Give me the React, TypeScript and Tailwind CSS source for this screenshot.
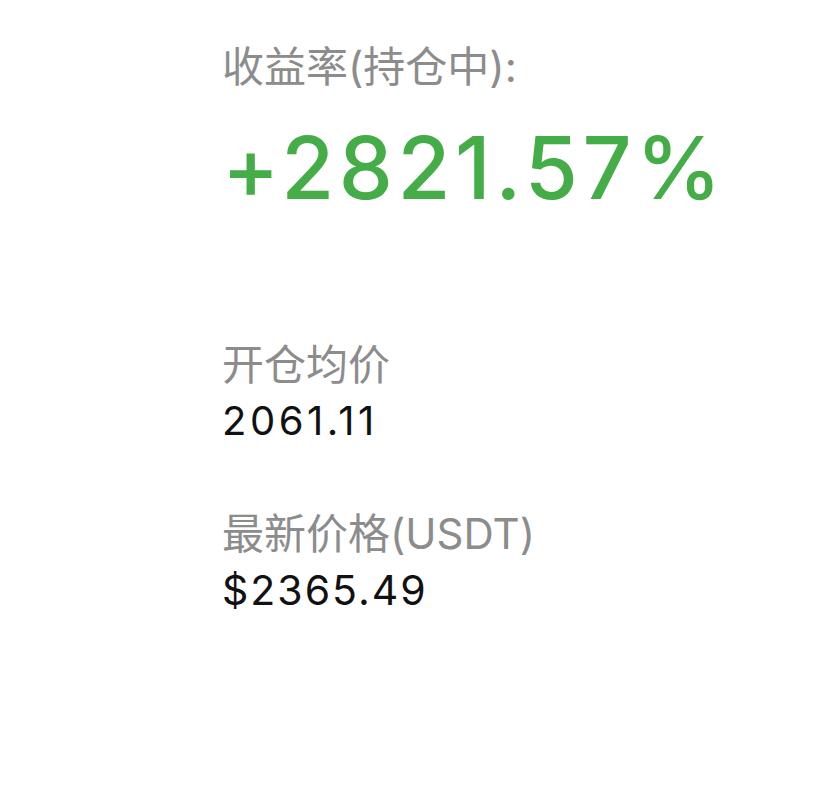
export default function App() {
  const label = 'text-[42px] leading-[42px] text-[#8c8c8c]';
  const value = 'text-[40px] leading-[40px] text-[#111111]';

  return (
    <div
      className="w-[828px] h-[806px] bg-white pl-[222px] pt-[46px] flex flex-col items-start"
      style={{ fontFamily: 'Inter, "Noto Sans CJK SC", sans-serif' }}
    >
      <div className={label}>收益率(持仓中):</div>
      <div className="mt-[36px] text-[86px] leading-[88px] font-medium tracking-[4.5px] text-[#45ad47]">
        +2821.57%
      </div>

      <div className={`${label} mt-[132px]`}>开仓均价</div>
      <div className={`${value} mt-[15px] tracking-[3.5px]`}>2061.11</div>

      <div className={`${label} mt-[72px]`}>最新价格(USDT)</div>
      <div className={`${value} mt-[15px] text-[41px] tracking-[2px]`}>$2365.49</div>
    </div>
  );
}
